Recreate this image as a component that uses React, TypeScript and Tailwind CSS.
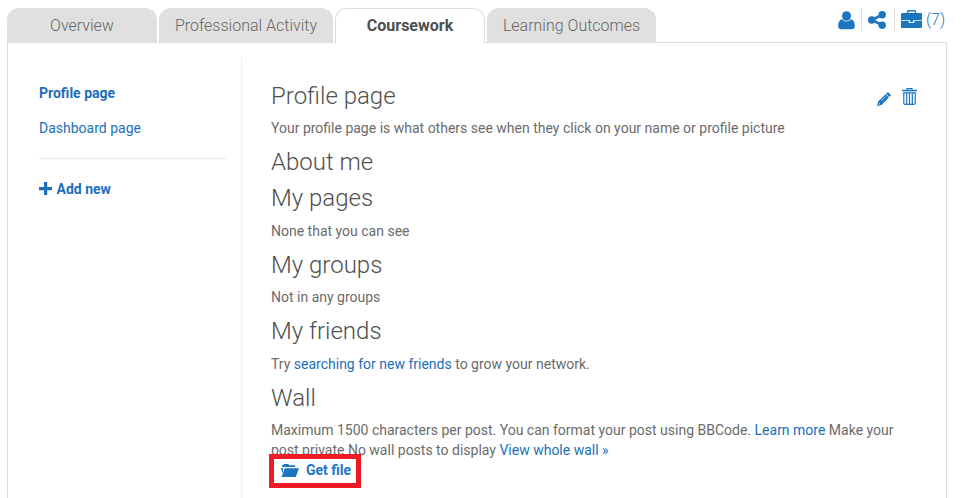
import React from "react";

type IconProps = { className?: string };

const UserIcon = ({ className }: IconProps) => (
  <svg className={className} width="17" height="19" viewBox="0 0 17 19" fill="currentColor">
    <ellipse cx="8.500" cy="5" rx="4.500" ry="4.800" />
    <path d="M4.200 8.200C1.200 8.800.2 11.800.2 15.300c0 1.900 1.200 3 3 3h10.600c1.800 0 3-1.100 3-3 0-3.500-1-6.500-4-7.100-1.200 1.500-2.700 2.200-4.300 2.200s-3.100-.7-4.300-2.200z" />
  </svg>
);

const ShareIcon = ({ className }: IconProps) => (
  <svg className={className} width="18" height="18" viewBox="0 0 18 18" fill="currentColor">
    <path d="M14 3.700 4 9l10 5.200" fill="none" stroke="currentColor" strokeWidth="2.600" />
    <circle cx="14.200" cy="3.700" r="3.700" />
    <circle cx="3.700" cy="9" r="3.700" />
    <circle cx="14.200" cy="14.300" r="3.700" />
  </svg>
);

const BriefcaseIcon = ({ className }: IconProps) => (
  <svg className={className} width="21" height="18" viewBox="0 0 21 18" fill="currentColor">
    <path d="M6.600 4V1.500Q6.600.700 7.400.700h6.200q.8 0 .8.800V4" fill="none" stroke="currentColor" strokeWidth="1.400" />
    <path d="M1 3h19q1 0 1 1v6.300H0V4q0-1 1-1z" />
    <path d="M0 11h7.700v2h5.600v-2H21v6q0 1-1 1H1q-1 0-1-1z" />
    <path d="M9 10h3v1.900H9z" />
  </svg>
);

const PencilIcon = ({ className }: IconProps) => (
  <svg className={className} width="14" height="14" viewBox="0 0 14 14" fill="currentColor">
    <path d="M10.100.7q.8-.8 1.600 0l1.700 1.700q.8.800 0 1.600l-1.100 1.100-3.300-3.300z" />
    <path fillRule="evenodd" d="m8.500 2.300 3.300 3.300-7.300 7.300L.1 13.900l1.100-4.300zM8.400 4.200 3.900 8.700l.4.400 4.500-4.500zM2.100 10.900l-.5 1.500 1.500-.5z" />
  </svg>
);

const TrashIcon = ({ className }: IconProps) => (
  <svg className={className} width="15" height="17" viewBox="0 0 15 17" fill="none" stroke="currentColor">
    <path d="M5 2V.600h5V2" strokeWidth="1.200" />
    <path d="M0 2.600h15" strokeWidth="1.500" />
    <path d="M1.800 4.900v10q0 1.400 1.400 1.400h8.600q1.400 0 1.400-1.400v-10zM4.700 5v11M7.500 5v11M10.300 5v11" strokeWidth="1.200" />
  </svg>
);

const PlusIcon = ({ className }: IconProps) => (
  <svg className={className} width="13" height="13" viewBox="0 0 13 13" fill="currentColor">
    <path d="M5 0h3.200v5H13v3.200H8.200V13H5V8.200H0V5h5z" />
  </svg>
);

const FolderIcon = ({ className }: IconProps) => (
  <svg className={className} width="18" height="13" viewBox="0 0 18 13" fill="currentColor">
    <path d="M1 1.300h1.200L3 0h4.300l.8 1.300h6V3H1z" />
    <path d="M0 4h2.200l-.3 6z" />
    <path d="M3.800 4.200H18L14.800 13H.6z" />
  </svg>
);

const tabs = [
  { label: "Overview", width: "w-[150px]" },
  { label: "Professional Activity", width: "w-[174px]" },
  { label: "Coursework", width: "w-[150px]", active: true },
  { label: "Learning Outcomes", width: "w-[169px]" },
];

const Heading = ({ children }: { children: React.ReactNode }) => (
  <h2 className="mb-[10px] text-[24px] font-light leading-[26.4px] text-[#4f4f4f]">{children}</h2>
);

const Text = ({ children }: { children: React.ReactNode }) => (
  <p className="-mt-[0.9px] mb-[10.9px] leading-5">{children}</p>
);

const Link = ({ children }: { children: React.ReactNode }) => (
  <a href="#" className="text-[#1b6fba]">{children}</a>
);

export default function App() {
  return (
    <div className="flex h-[498px] w-[961px] flex-col overflow-hidden bg-white pl-[7px] pr-[16px] pt-2 font-['Roboto',sans-serif] text-[14px] text-[#6b6b6b]">
      <header className="relative z-10 flex h-[35px] shrink-0 justify-between">
        <nav className="flex gap-[2px]">
          {tabs.map((tab) => (
            <a
              key={tab.label}
              href="#"
              className={`${tab.width} flex h-[35px] justify-center rounded-t-[12px] border border-b-0 pt-[5px] text-[16px] leading-6 ${
                tab.active
                  ? "border-[#dddddd] bg-white font-bold text-[#4f4f4f]"
                  : "border-[#e0e0e0] bg-[#e0e0e0] font-light text-[#666666]"
              }`}
            >
              {tab.label}
            </a>
          ))}
        </nav>
        <div className="flex h-[23px] text-[#1b75bf]">
          <span className="flex w-[24px] pt-[3px]"><UserIcon className="ml-px" /></span>
          <span className="flex w-[33px] border-l border-[#dddddd] pl-[6px] pt-[3px]"><ShareIcon /></span>
          <span className="flex w-[51px] border-l border-[#dddddd] pl-[6px] pt-[2px]">
            <BriefcaseIcon className="shrink-0" />
            <span className="ml-[4px] mt-[-2px] text-[16px] font-light leading-6">(7)</span>
          </span>
        </div>
      </header>
      <main className="-mt-px flex h-[457px] w-[940px] shrink-0 border border-b-0 border-[#dddddd]">
        <aside className="mt-[14px] w-[234px] border-r border-[#eeeeee] pl-[31px] pr-[15px] pt-[26px] leading-5 text-[#1b6fba]">
          <a href="#" className="block font-bold">Profile page</a>
          <a href="#" className="mt-[15px] block">Dashboard page</a>
          <hr className="mt-[20px] border-[#eaeaea]" />
          <a href="#" className="mt-[20px] flex items-center font-bold">
            <PlusIcon className="mb-[2px] mr-[4.500px]" />
            Add new
          </a>
        </aside>
        <section className="relative w-[680px] pl-[29px] pt-[39.6px]">
          <div className="absolute left-[635px] top-[45px] flex text-[#1b75bf]">
            <PencilIcon className="mt-[4px]" />
            <TrashIcon className="ml-[11px]" />
          </div>
          <Heading>Profile page</Heading>
          <Text>Your profile page is what others see when they click on your name or profile picture</Text>
          <Heading>About me</Heading>
          <Heading>My pages</Heading>
          <Text>None that you can see</Text>
          <Heading>My groups</Heading>
          <Text>Not in any groups</Text>
          <Heading>My friends</Heading>
          <Text>Try <Link>searching for new friends</Link> to grow your network.</Text>
          <Heading>Wall</Heading>
          <p className="-mt-[0.9px] w-[650px] leading-5">
            Maximum 1500 characters per post. You can format your post using BBCode. <Link>Learn more</Link> Make your
            <br />
            post private No wall posts to display <Link>View whole wall »</Link>
          </p>
          <a
            href="#"
            className="absolute left-[27px] top-[411px] flex h-[34px] w-[92px] items-center border-5 border-[#ed1c24] bg-white pb-[2px] pl-[7px] font-bold text-[#1b75bf]"
          >
            <FolderIcon className="mr-[7px] shrink-0" />
            Get file
          </a>
        </section>
      </main>
    </div>
  );
}
